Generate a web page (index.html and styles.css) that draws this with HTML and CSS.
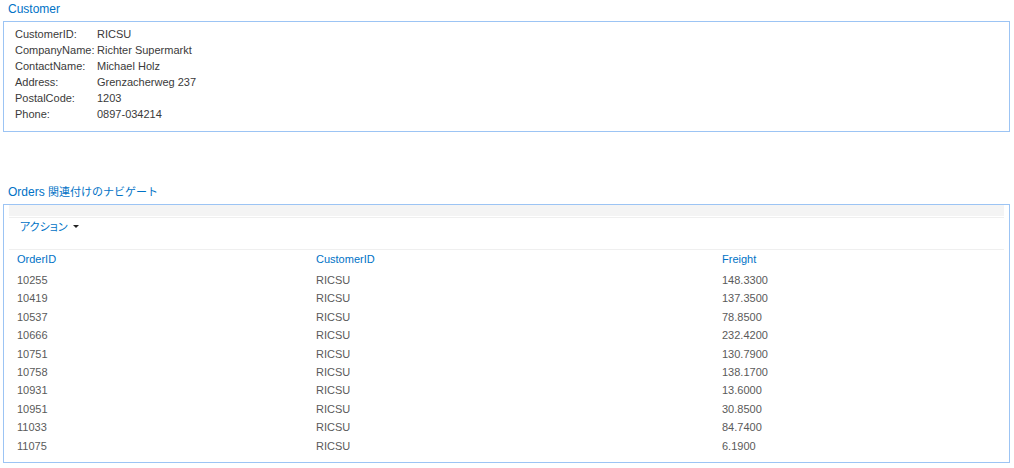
FILE: index.html
```html
<!DOCTYPE html>
<html lang="ja">
<head>
<meta charset="utf-8">
<title>Customer</title>
<link rel="stylesheet" href="styles.css">
</head>
<body>
<div class="page">
  <h2 class="title">Customer</h2>
  <div class="panel panel-customer">
    <table class="details">
      <tr><td class="label">CustomerID:</td><td>RICSU</td></tr>
      <tr><td class="label">CompanyName:</td><td>Richter Supermarkt</td></tr>
      <tr><td class="label">ContactName:</td><td>Michael Holz</td></tr>
      <tr><td class="label">Address:</td><td>Grenzacherweg 237</td></tr>
      <tr><td class="label">PostalCode:</td><td>1203</td></tr>
      <tr><td class="label">Phone:</td><td>0897-034214</td></tr>
    </table>
  </div>

  <h2 class="title title-orders">Orders <span class="ja">関連付けのナビゲート</span></h2>
  <div class="panel panel-orders">
    <div class="band"></div>
    <div class="toolbar"><span class="action">アクション</span><span class="caret"></span></div>
    <table class="grid">
      <thead>
        <tr><th class="c1">OrderID</th><th class="c2">CustomerID</th><th class="c3">Freight</th></tr>
      </thead>
      <tbody>
        <tr><td>10255</td><td>RICSU</td><td>148.3300</td></tr>
        <tr><td>10419</td><td>RICSU</td><td>137.3500</td></tr>
        <tr><td>10537</td><td>RICSU</td><td>78.8500</td></tr>
        <tr><td>10666</td><td>RICSU</td><td>232.4200</td></tr>
        <tr><td>10751</td><td>RICSU</td><td>130.7900</td></tr>
        <tr><td>10758</td><td>RICSU</td><td>138.1700</td></tr>
        <tr><td>10931</td><td>RICSU</td><td>13.6000</td></tr>
        <tr><td>10951</td><td>RICSU</td><td>30.8500</td></tr>
        <tr><td>11033</td><td>RICSU</td><td>84.7400</td></tr>
        <tr><td>11075</td><td>RICSU</td><td>6.1900</td></tr>
      </tbody>
    </table>
  </div>
</div>
</body>
</html>
```

FILE: styles.css
```css
html, body {
  margin: 0;
  padding: 0;
  background: #fff;
}

body {
  font-family: "Liberation Sans", "Noto Sans CJK JP", sans-serif;
  font-size: 11px;
  color: #444;
}

.page {
  padding: 0 4px 0 3px;
}

.title {
  margin: 0;
  padding: 1px 0 4px 5px;
  height: 16px;
  line-height: 16px;
  font-size: 12px;
  font-weight: normal;
  color: #0072c6;
  white-space: nowrap;
}

.title-orders {
  margin-top: 51px;
}

.title .ja {
  font-family: "Noto Sans CJK JP", sans-serif;
  font-size: 11px;
  line-height: 1;
}

.panel {
  border: 1px solid #9cc4f4;
}

.panel-customer {
  padding: 4px 0 9px 11px;
}

.details {
  border-collapse: collapse;
  color: #3a3a3a;
}

.details td {
  padding: 0;
  height: 16px;
  line-height: 16px;
  white-space: nowrap;
}

.details .label {
  width: 82px;
}

.panel-orders {
  padding: 0 5px 7px 5px;
}

.band {
  height: 11px;
  background: #f4f4f4;
  margin-bottom: 1px;
}

.toolbar {
  height: 31px;
  border-top: 1px solid #efefef;
  border-bottom: 1px solid #efefef;
  padding-left: 11px;
  display: flex;
  align-items: flex-start;
}

.action {
  font-family: "Noto Sans CJK JP", sans-serif;
  font-size: 11px;
  line-height: 16px;
  color: #0072c6;
  font-feature-settings: "palt";
}

.caret {
  width: 0;
  height: 0;
  margin: 7px 0 0 5px;
  border-left: 3px solid transparent;
  border-right: 3px solid transparent;
  border-top: 3px solid #222;
}

.grid {
  width: 100%;
  border-collapse: collapse;
  table-layout: fixed;
}

.grid th {
  text-align: left;
  font-weight: normal;
  color: #0072c6;
  padding: 0 0 2px 8px;
  line-height: 19px;
  height: 19px;
}

.grid .c1 { width: 291px; }
.grid .c2 { width: 398px; }

.grid td {
  padding: 0 0 0 8px;
  line-height: 18.4px;
  height: 18.4px;
  color: #5a5a5a;
  white-space: nowrap;
}
```
